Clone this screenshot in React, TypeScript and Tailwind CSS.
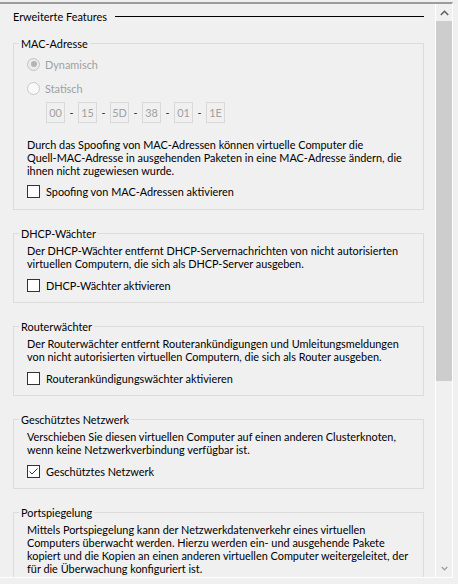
import type { ReactNode } from 'react';

const font = { fontFamily: 'Lato, "Noto Sans", sans-serif' };

function Group({ title, children, last }: { title: string; children: ReactNode; last?: boolean }) {
  return (
    <fieldset className={`border border-[#dcdcdc] ${last ? 'pb-[40px]' : 'pb-[9px]'} mt-[17px]`}>
      <legend className="ml-[5px] px-[2px] leading-[13px]">{title}</legend>
      <div className="pl-[13px]">{children}</div>
    </fieldset>
  );
}

function Lines({ lines, className = '' }: { lines: string[]; className?: string }) {
  return (
    <div className={`leading-[13px] whitespace-nowrap ${className}`}>
      {lines.map((line) => (
        <div key={line}>{line}</div>
      ))}
    </div>
  );
}

function Checkbox({ label, checked, className = 'mt-[8px]' }: { label: string; checked?: boolean; className?: string }) {
  return (
    <div className={`flex items-center h-[15px] gap-[6px] ${className}`}>
      <div className="w-[13px] h-[13px] border border-[#333333] bg-white flex items-center justify-center">
        {checked && (
          <svg width="11" height="11" viewBox="0 0 11 11">
            <polyline points="1.5,5.5 4,8 9.5,2.5" fill="none" stroke="#333333" strokeWidth="1" />
          </svg>
        )}
      </div>
      <span className="leading-[13px]">{label}</span>
    </div>
  );
}

function Radio({ label, selected }: { label: string; selected?: boolean }) {
  return (
    <div className="flex items-center h-[20px] gap-[5px] mt-[4px] text-[#a0a0a0]">
      <div
        className={`w-[13px] h-[13px] rounded-full border flex items-center justify-center ${
          selected ? 'border-[#c2c2c2] bg-[#ebebeb]' : 'border-[#c8c8c8] bg-[#f9f9f9]'
        }`}
      >
        {selected && <div className="w-[6px] h-[6px] rounded-full bg-[#b4b4b4]" />}
      </div>
      <span className="leading-[13px]">{label}</span>
    </div>
  );
}

export default function App() {
  const mac = ['00', '15', '5D', '38', '01', '1E'];

  return (
    <div className="w-[458px] h-[584px] bg-[#f0f0f0] overflow-hidden text-[10.9px] text-black" style={font}>
      <div className="mt-[2px] w-[453px] h-[576px] flex border-t-2 border-t-[#9c9c9c] border-r border-r-white border-b border-b-white">
        {/* content */}
        <div className="w-[435px] h-full overflow-hidden pl-[13px] pr-[11px] pt-[6px]">
          <div className="flex items-center gap-[8px] leading-[13px]">
            <span>Erweiterte Features</span>
            <div className="flex-1 h-px bg-black" />
          </div>

          <fieldset className="border border-[#dcdcdc] pb-[10px] mt-[14px]">
            <legend className="ml-[5px] px-[2px] leading-[13px]">MAC-Adresse</legend>
            <div className="pl-[13px]">
              <Radio label="Dynamisch" selected />
              <Radio label="Statisch" />
              <div className="flex items-center mt-[4px] ml-[19px]">
                {mac.map((part, i) => (
                  <div key={part} className="flex items-center">
                    {i > 0 && <span className="w-[13px] text-center leading-[13px] text-[#333333]">-</span>}
                    <div className="w-[19px] h-[21px] border border-[#d9d9d9] flex items-center justify-center text-[#a0a0a0] leading-[13px]">
                      {part}
                    </div>
                  </div>
                ))}
              </div>
              <Lines
                className="mt-[15px]"
                lines={[
                  'Durch das Spoofing von MAC-Adressen können virtuelle Computer die',
                  'Quell-MAC-Adresse in ausgehenden Paketen in eine MAC-Adresse ändern, die',
                  'ihnen nicht zugewiesen wurde.',
                ]}
              />
              <Checkbox label="Spoofing von MAC-Adressen aktivieren" className="mt-[7px]" />
            </div>
          </fieldset>

          <Group title="DHCP-Wächter">
            <Lines
              className="mt-[4px]"
              lines={[
                'Der DHCP-Wächter entfernt DHCP-Servernachrichten von nicht autorisierten',
                'virtuellen Computern, die sich als DHCP-Server ausgeben.',
              ]}
            />
            <Checkbox label="DHCP-Wächter aktivieren" />
          </Group>

          <Group title="Routerwächter">
            <Lines
              className="mt-[4px]"
              lines={[
                'Der Routerwächter entfernt Routerankündigungen und Umleitungsmeldungen',
                'von nicht autorisierten virtuellen Computern, die sich als Router ausgeben.',
              ]}
            />
            <Checkbox label="Routerankündigungswächter aktivieren" />
          </Group>

          <Group title="Geschütztes Netzwerk">
            <Lines
              className="mt-[4px]"
              lines={[
                'Verschieben Sie diesen virtuellen Computer auf einen anderen Clusterknoten,',
                'wenn keine Netzwerkverbindung verfügbar ist.',
              ]}
            />
            <Checkbox label="Geschütztes Netzwerk" checked />
          </Group>

          <Group title="Portspiegelung" last>
            <Lines
              className="mt-[4px]"
              lines={[
                'Mittels Portspiegelung kann der Netzwerkdatenverkehr eines virtuellen',
                'Computers überwacht werden. Hierzu werden ein- und ausgehende Pakete',
                'kopiert und die Kopien an einen anderen virtuellen Computer weitergeleitet, der',
                'für die Überwachung konfiguriert ist.',
              ]}
            />
          </Group>
        </div>

        {/* scrollbar */}
        <div className="w-[17px] h-full border-l border-l-white flex flex-col">
          <div className="h-[17px] flex items-center justify-center">
            <svg width="9" height="6" viewBox="0 0 9 6">
              <polyline points="0.8,5 4.5,1.3 8.2,5" fill="none" stroke="#606060" strokeWidth="1.6" />
            </svg>
          </div>
          <div className="h-[360px] bg-[#cdcdcd]" />
          <div className="flex-1" />
          <div className="h-[17px] flex items-center justify-center">
            <svg width="7" height="5" viewBox="0 0 7 5">
              <polyline points="0.7,1 3.5,3.8 6.3,1" fill="none" stroke="#a3a3a3" strokeWidth="1.4" />
            </svg>
          </div>
        </div>
      </div>
    </div>
  );
}
